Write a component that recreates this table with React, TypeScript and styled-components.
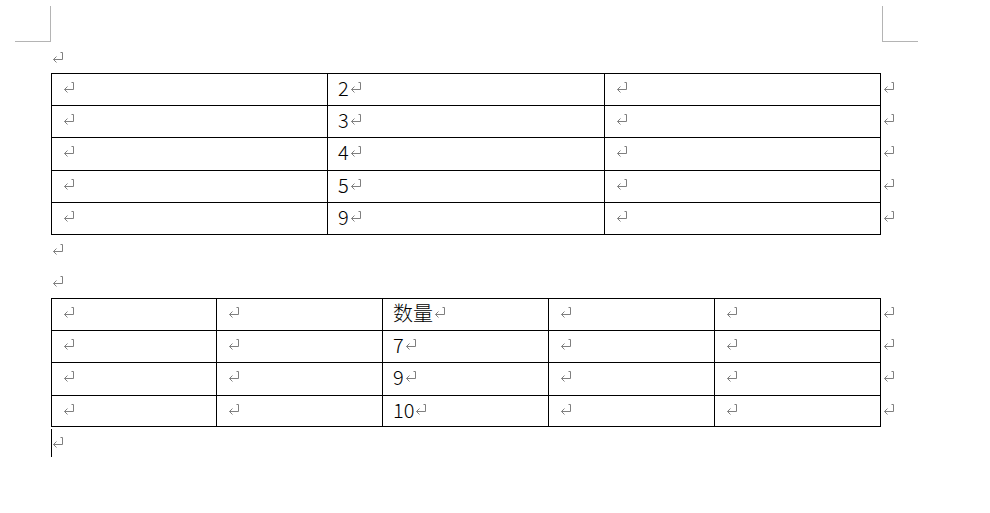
import React from "react";
import styled, { createGlobalStyle } from "styled-components";

const Global = createGlobalStyle`
  html, body { margin: 0; padding: 0; background: #ffffff; }
  body { font-family: "Noto Sans CJK SC", "Liberation Sans", sans-serif; color: #000; }
`;

const Page = styled.div`
  width: 990px;
  height: 513px;
  background: #fff;
  display: flex;
  flex-direction: column;
  overflow: hidden;
`;

const CornerRow = styled.div`
  display: flex;
  height: 42px;
  flex: none;
`;

const Corner = styled.div<{ $side: "left" | "right" }>`
  margin-top: 6px;
  width: 35px;
  height: 35px;
  border-bottom: 1px solid #b4b4b4;
  ${(p) =>
    p.$side === "left"
      ? "margin-left: 15px; border-right: 1px solid #b4b4b4;"
      : "margin-left: 831px; border-left: 1px solid #b4b4b4;"}
`;

const Body = styled.div`
  margin-left: 51px;
  display: flex;
  flex-direction: column;
`;

const Para = styled.div<{ $h: number; $pt: number }>`
  height: ${(p) => p.$h}px;
  padding-top: ${(p) => p.$pt}px;
  box-sizing: border-box;
  display: flex;
  align-items: flex-start;
`;

const Caret = styled.div`
  width: 1px;
  height: 28px;
  margin-top: -8px;
  background: #000;
  margin-right: -1px;
`;

const Table = styled.div`
  display: flex;
  flex-direction: column;
`;

const Row = styled.div<{ $h: number }>`
  display: flex;
  height: ${(p) => p.$h}px;
`;

const Cell = styled.div<{ $w: number; $first?: boolean; $top?: boolean }>`
  width: ${(p) => p.$w}px;
  box-sizing: border-box;
  padding-left: 10px;
  padding-top: 2px;
  font-size: 20px;
  font-weight: 300;
  line-height: 24px;
  white-space: nowrap;
  color: #000;
  border-right: 1px solid #000;
  border-bottom: 1px solid #000;
  ${(p) => (p.$first ? "border-left: 1px solid #000; width: " + (p.$w + 1) + "px;" : "")}
  ${(p) => (p.$top ? "border-top: 1px solid #000;" : "")}
`;

const RowEnd = styled.div<{ $top?: boolean }>`
  padding-left: 1px;
  padding-top: ${(p) => (p.$top ? 3 : 2)}px;
  font-size: 20px;
  font-weight: 300;
  line-height: 24px;
`;

const MarkSvg = styled.svg<{ $lift: number }>`
  display: inline-block;
  vertical-align: ${(p) => p.$lift}px;
  margin-left: 1px;
`;

const Mark = ({ lift = 0 }: { lift?: number }) => (
  <MarkSvg $lift={lift} width="12" height="11" viewBox="0 0 12 11" fill="none">
    <path d="M8.5 0.5 H10.5 V7.5 H1.5" stroke="#7f7f7f" strokeWidth="1" />
    <path d="M4.5 4.5 L1.5 7.5 L4.5 10.5" stroke="#7f7f7f" strokeWidth="1" />
  </MarkSvg>
);

type TableSpec = { widths: number[]; heights: number[]; center: string[] };

const t1: TableSpec = {
  widths: [276, 277, 276],
  heights: [33, 32, 33, 32, 32],
  center: ["2", "3", "4", "5", "9"],
};

const t2: TableSpec = {
  widths: [165, 166, 166, 166, 166],
  heights: [33, 32, 33, 31],
  center: ["数量", "7", "9", "10"],
};

const DocTable = ({ spec, textCol }: { spec: TableSpec; textCol: number }) => (
  <Table>
    {spec.heights.map((h, r) => (
      <Row key={r} $h={h}>
        {spec.widths.map((w, c) => (
          <Cell key={c} $w={w} $first={c === 0} $top={r === 0}>
            {c === textCol ? spec.center[r] : null}
            <Mark lift={3} />
          </Cell>
        ))}
        <RowEnd $top={r === 0}>
          <Mark lift={3} />
        </RowEnd>
      </Row>
    ))}
  </Table>
);

export default function App() {
  return (
    <Page>
      <Global />
      <CornerRow>
        <Corner $side="left" />
        <Corner $side="right" />
      </CornerRow>
      <Body>
        <Para $h={31} $pt={10}>
          <Mark />
        </Para>
        <DocTable spec={t1} textCol={1} />
        <Para $h={32} $pt={9}>
          <Mark />
        </Para>
        <Para $h={31} $pt={9}>
          <Mark />
        </Para>
        <DocTable spec={t2} textCol={2} />
        <Para $h={40} $pt={10}>
          <Caret />
          <Mark />
        </Para>
      </Body>
    </Page>
  );
}
